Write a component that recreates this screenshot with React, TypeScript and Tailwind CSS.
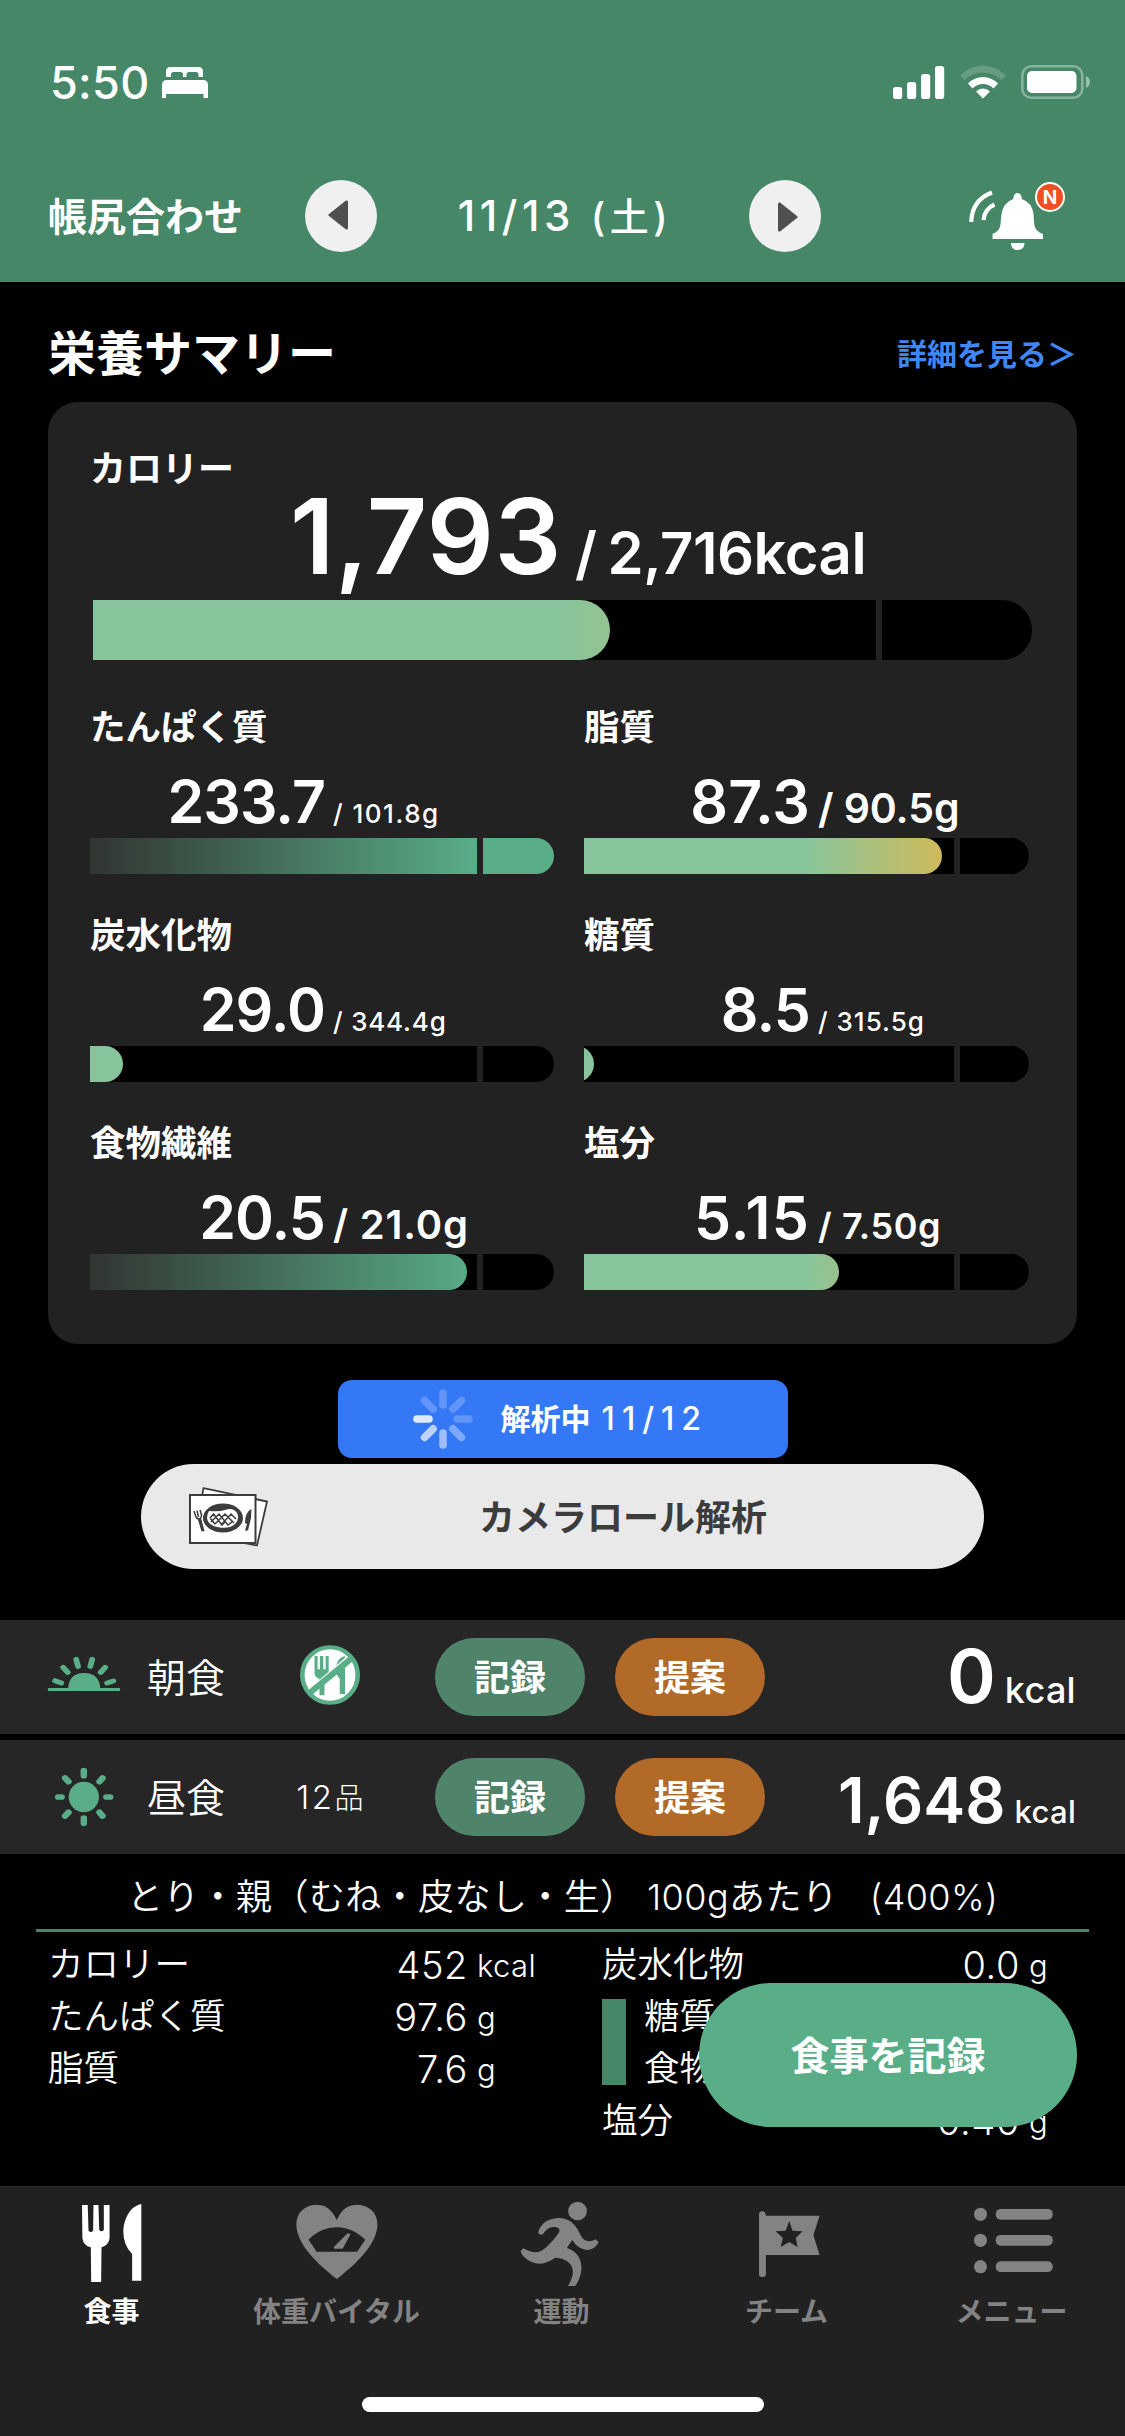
import type { ReactNode } from 'react';

interface Nutrient {
  name: string;
  value: string;
  valueClass?: string;
  target: string;
  targetClass: string;
  fill: number;
  gradient: string;
  over?: boolean;
}

interface Meal {
  name: string;
  icon: ReactNode;
  count: ReactNode;
  kcal: string;
  kcalClass: string;
  unitClass: string;
}

const LIMIT_GRADIENT = 'bg-[linear-gradient(to_right,#88c49b_60%,#d4ba56_100%)]';
const GOAL_GRADIENT = 'bg-[linear-gradient(to_right,#313531,#59ae88)]';

const leftNutrients: Nutrient[] = [
  { name: 'たんぱく質', value: '233.7', target: '101.8g', targetClass: 'text-[26px] font-medium tracking-[1.5px]', fill: 387, gradient: GOAL_GRADIENT, over: true },
  { name: '炭水化物', value: '29.0', target: '344.4g', targetClass: 'text-[26px] font-medium tracking-[0.8px]', fill: 33, gradient: LIMIT_GRADIENT },
  { name: '食物繊維', value: '20.5', target: '21.0g', targetClass: 'text-[40px] font-semibold tracking-[0.8px]', fill: 377, gradient: GOAL_GRADIENT },
];

const rightNutrients: Nutrient[] = [
  { name: '脂質', value: '87.3', valueClass: 'tracking-[0.1px]', target: '90.5g', targetClass: 'text-[41px] font-semibold tracking-[-0.1px]', fill: 358, gradient: LIMIT_GRADIENT },
  { name: '糖質', value: '8.5', target: '315.5g', targetClass: 'text-[26px] font-medium tracking-[1px]', fill: 10, gradient: LIMIT_GRADIENT },
  { name: '塩分', value: '5.15', valueClass: 'tracking-[1.2px]', target: '7.50g', targetClass: 'text-[36px] font-semibold tracking-[0.6px]', fill: 255, gradient: LIMIT_GRADIENT },
];

const StatusBar = () => (
  <div className="flex h-[150px] items-center pt-[14px] pl-[50px]">
    <span className="w-[112px] text-[45px] leading-none font-medium tracking-[0.3px]">5:50</span>
    <svg className="h-[31px] w-[46px]" viewBox="0 0 46 31" fill="#fff">
      <path d="M4 10V4.500Q4 0 8.500 0H36.500Q41 0 41 4.500V10H36.500V7.500Q36.500 5 34 5H27Q24.500 5 24.500 7.500V10H21V7.500Q21 5 18.500 5H11.500Q9 5 9 7.500V10Z" />
      <path d="M5 13H41Q46 13 46 18V31H41.500V27H4V31H0V18Q0 13 5 13Z" />
    </svg>
    <svg className="ml-auto h-[33px] w-[52px]" viewBox="0 0 52 33" fill="#fff">
      <rect x="0" y="21" width="9.200" height="12" rx="2.800" />
      <rect x="14" y="16" width="9.200" height="17" rx="2.800" />
      <rect x="28" y="8" width="9.200" height="25" rx="2.800" />
      <rect x="42" y="0" width="9.200" height="33" rx="2.800" />
    </svg>
    <svg className="ml-[15px] h-[34px] w-[46px]" viewBox="0 0 46 34" fill="#fff">
      <path d="M0 10.500Q10 0.500 23 0.500T46 10.500L41.500 15Q33 7.500 23 7.500T4.500 15Z" opacity=".18" />
      <path d="M8 18.500Q14.500 12 23 12T38 18.500L33.500 23.500Q29 19 23 19T12.500 23.500Z" />
      <path d="M16 26.500Q19 23.500 23 23.500T30 26.500L23 33.500Z" />
    </svg>
    <svg className="mr-[34px] ml-[15px] h-[34px] w-[70px]" viewBox="0 0 70 34">
      <rect x="1.300" y="1.300" width="60" height="31.400" rx="9" fill="none" stroke="#fff" strokeWidth="2.600" opacity=".36" />
      <rect x="6" y="6" width="49.500" height="22" rx="5" fill="#fff" />
      <path d="M65 11Q69 12.500 69 17T65 23Z" fill="#fff" opacity=".45" />
    </svg>
  </div>
);

const ArrowButton = ({ direction }: { direction: 'prev' | 'next' }) => (
  <button className="flex size-[72px] items-center justify-center rounded-full bg-[#f0f0f0]">
    {direction === 'prev' ? (
      <svg className="mt-[-2px] mr-[6px] h-[30px] w-[20px]" viewBox="0 0 20 30" fill="#505050">
        <path d="M1 14L18 .600Q20 0 20 2V28Q20 30 18 29.400L1 16Q-.500 15 1 14Z" />
      </svg>
    ) : (
      <svg className="mt-[2px] ml-[6px] h-[30px] w-[20px]" viewBox="0 0 20 30" fill="#505050">
        <path d="M19 14L2 .600Q0 0 0 2V28Q0 30 2 29.400L19 16Q20.500 15 19 14Z" />
      </svg>
    )}
  </button>
);

const NavBar = () => (
  <div className="flex h-[132px] items-center pl-[48px]">
    <span className="w-[257px] text-[39px] leading-none font-bold">帳尻合わせ</span>
    <ArrowButton direction="prev" />
    <span className="w-[372px] pl-[4px] text-center text-[42px] leading-none font-medium tracking-[4.6px]">
      11/13 <span className="text-[39px]">(土)</span>
    </span>
    <ArrowButton direction="next" />
    <div className="relative ml-[145px] h-[74px] w-[102px]">
      <svg className="h-[74px] w-[102px]" viewBox="0 0 102 74" fill="#fff">
        <path d="M51.500 14Q55.500 14 55.800 20Q66 23.500 67.500 35C68.500 46 67 51 77 55V60H26.500V55C36 51 34 46 35.500 35Q37.500 23.500 47.200 20Q47.500 14 51.500 14Z" />
        <path d="M45 64H58.500Q58.500 71 51.700 71T45 64Z" />
        <path d="M5.200 43Q6 21 26 13.500M17.500 41Q18.500 30 28.500 25.500" fill="none" stroke="#fff" strokeWidth="4.200" />
      </svg>
      <span className="absolute top-[3px] left-[69px] flex size-[30px] items-center justify-center rounded-full border-[2.500px] border-white bg-[#f04e23] text-[19px] leading-none font-bold">
        N
      </span>
    </div>
  </div>
);

// The gradient always spans the whole track, the clip cuts it at the current value.
const Bar = ({ track, fill, gradient, over, size }: { track: number; fill: number; gradient: string; over?: boolean; size: 'lg' | 'sm' }) => (
  <div className={size === 'lg' ? 'ml-[3px] flex h-[60px] w-[939px] gap-[6px]' : 'flex h-9 gap-[6px]'}>
    <div className="overflow-hidden bg-black" style={{ width: track }}>
      <div
        className={`h-full ${gradient}`}
        style={{ clipPath: over ? undefined : `inset(0 ${track - fill}px 0 -60px round 30px)` }}
      />
    </div>
    <div className={`flex-1 rounded-r-full ${over ? 'bg-[#59ae88]' : 'bg-black'}`} />
  </div>
);

const NutrientCell = ({ item, side }: { item: Nutrient; side: 'left' | 'right' }) => (
  <div>
    <div className="h-12 text-[35.5px] leading-[50px] font-bold">{item.name}</div>
    <div className="flex h-[87px] items-baseline pt-[22px] font-semibold whitespace-nowrap">
      <span
        className={`text-right text-[59px] leading-[57px] ${item.valueClass ?? 'tracking-[-0.9px]'} ${side === 'left' ? 'w-[235px]' : 'w-[226px]'}`}
      >
        {item.value}
      </span>
      <span className={`ml-[8px] leading-none ${item.targetClass}`}>/ {item.target}</span>
    </div>
    <Bar track={side === 'left' ? 387 : 370} fill={item.fill} gradient={item.gradient} over={item.over} size="sm" />
  </div>
);

const SummaryCard = () => (
  <section className="mx-12 h-[942px] rounded-[30px] bg-[#222222] pt-[42px] pl-[42px]">
    <div className="h-12 text-[36px] leading-[50px] font-bold">カロリー</div>
    <div className="flex h-[108px] items-baseline font-semibold whitespace-nowrap">
      <span className="w-[472px] text-right text-[105px] leading-[88px] tracking-[0.6px]">1,793</span>
      <span className="ml-[13px] text-[58px] leading-none tracking-[-0.5px] [word-spacing:-3px]">/ 2,716kcal</span>
    </div>
    <Bar track={783} fill={517} gradient={LIMIT_GRADIENT} size="lg" />
    <div className="mt-[43px] flex gap-[30px]">
      <div className="flex w-[464px] flex-col gap-[37px]">
        {leftNutrients.map((item) => (
          <NutrientCell key={item.name} item={item} side="left" />
        ))}
      </div>
      <div className="flex w-[445px] flex-col gap-[37px]">
        {rightNutrients.map((item) => (
          <NutrientCell key={item.name} item={item} side="right" />
        ))}
      </div>
    </div>
  </section>
);

const Spinner = () => (
  <svg className="size-[60px]" viewBox="-30 -30 60 60" stroke="#fff" strokeWidth="7.600" strokeLinecap="round">
    {[0.22, 0.22, 0.22, 0.36, 0.52, 0.68, 0.85, 0.22].map((opacity, i) => (
      <line key={i} x1="0" y1="-14" x2="0" y2="-26" opacity={opacity} transform={`rotate(${i * 45})`} />
    ))}
  </svg>
);

const PhotoIcon = () => (
  <svg className="h-[60px] w-[80px]" viewBox="0 0 80 60">
    <path d="M14.500 1.200L78 14.500L68 58.500L6 46Z" fill="#fff" stroke="#3c3c3c" strokeWidth="1.800" />
    <rect x="1" y="8" width="65.500" height="48" fill="#fff" stroke="#3c3c3c" strokeWidth="2" />
    <ellipse cx="34" cy="31" rx="20" ry="14.500" fill="#3c3c3c" />
    <path d="M20 24Q30 25 36 23Q44 20 48 26Q51 32 46 37Q40 42 31 40.500Q19 39 18 31Q18 27 20 24Z" fill="#fff" />
    <path
      d="M21 31L24.500 27L33 38L36 35M22 35L30 27L39 38L44 34M26 37L36 27L45 36M32 38L42 27L47 32M21 31L26 37"
      fill="none"
      stroke="#3c3c3c"
      strokeWidth="1.500"
    />
    <path d="M5 24L7 30Q9 33 11 31.500Q13 30 12.500 28L11 23M8 23.500L9.500 30" fill="none" stroke="#3c3c3c" strokeWidth="1.500" />
    <path d="M8.500 31L12 31L15.500 44L12.500 44.500Z" fill="#3c3c3c" />
    <path d="M62.500 22Q56 25 56 36L58 37L56 43.500H59L62 31Z" fill="#3c3c3c" />
  </svg>
);

const SunriseIcon = () => (
  <svg className="size-[76px]" viewBox="120.200 117 198.600 228" preserveAspectRatio="none" fill="#59ae88">
    <rect x="125" y="264" width="189" height="9" rx="3" />
    <path d="M178 266Q180 219 220 219T262 266Z" />
    <path d="M144 242L160 249M165 202L177 217M199 178L204 199M241 178L236 199M275 202L263 217M296 243L280 249" stroke="#59ae88" strokeWidth="15" strokeLinecap="round" />
  </svg>
);

const SunIcon = () => (
  <svg className="size-[76px]" viewBox="120.200 477 198.600 228" preserveAspectRatio="none" fill="#59ae88">
    <ellipse cx="219" cy="591" rx="39.500" ry="45.500" />
    <path
      d="M219 512V527M219 654V670M152 591H161M278 591H288M170 534L179 545M268 534L260 545M170 648L179 637M268 648L260 637"
      stroke="#59ae88"
      strokeWidth="17"
      strokeLinecap="round"
    />
  </svg>
);

const NoMealIcon = () => (
  <svg className="mb-1 size-[60px]" viewBox="784 135 157 180" preserveAspectRatio="none">
    <ellipse cx="862.500" cy="225" rx="72.500" ry="83.500" fill="#fff" stroke="#59ae88" strokeWidth="12" />
    <path
      d="M822 168H830V208H836V168H845V208H851V168H859V218Q859 232 848 236V286H835V236Q822 232 822 218ZM902 168V282H888V236Q876 222 878 200Q882 172 902 168Z"
      fill="#59ae88"
    />
    <path d="M808 270L908 172" stroke="#fff" strokeWidth="6" />
    <path d="M808 280L918 176" stroke="#59ae88" strokeWidth="17" />
  </svg>
);

const meals: Meal[] = [
  {
    name: '朝食',
    icon: <SunriseIcon />,
    count: <NoMealIcon />,
    kcal: '0',
    kcalClass: 'text-[74px] leading-[112px]',
    unitClass: 'text-[36px] ml-[9px] tracking-[0.3px]',
  },
  {
    name: '昼食',
    icon: <SunIcon />,
    count: (
      <>
        <span className="text-[33px] tracking-[2.5px]">12</span>品
      </>
    ),
    kcal: '1,648',
    kcalClass: 'text-[63px] leading-[120px]',
    unitClass: 'text-[31px] ml-[9px] tracking-[0.3px]',
  },
];

const MealRow = ({ meal }: { meal: Meal }) => (
  <div className="flex h-[114px] items-center bg-[#262626] pl-[46px]">
    {meal.icon}
    <span className="ml-[25px] w-[144px] text-[39px] leading-none font-[350]">{meal.name}</span>
    <span className="flex w-[78px] items-baseline justify-center text-[29px] leading-none font-light whitespace-nowrap">{meal.count}</span>
    <button className="ml-[66px] h-[78px] w-[150px] rounded-full bg-[#4f846b] pt-[2px] text-[36px] leading-none font-bold">記録</button>
    <button className="ml-[30px] h-[78px] w-[150px] rounded-full bg-[#b16a28] pt-[2px] text-[36px] leading-none font-bold">提案</button>
    <div className="flex flex-1 items-baseline justify-end self-start pr-[49px] font-semibold">
      <span className={meal.kcalClass}>{meal.kcal}</span>
      <span className={`leading-none font-medium ${meal.unitClass}`}>kcal</span>
    </div>
  </div>
);

const DetailRow = ({ name, value, unit }: { name: string; value: string; unit: string }) => (
  <div className="flex h-[52px] items-center">
    <span className="text-[35.5px] leading-none">{name}</span>
    <span className="ml-auto text-[38px] leading-none tracking-[0.6px]">{value}</span>
    <span className="w-[76px] pl-[9px] text-[31px] leading-none tracking-[0.4px]">{unit}</span>
  </div>
);

const FoodDetail = () => (
  <section className="relative h-[332px] font-[350]">
    <div className="mx-9 h-[78px] border-b-[3px] border-[#458767] pt-[10px] text-center text-[36px] leading-[66px] tracking-[0.4px] whitespace-pre">
      とり・親（むね・皮なし・生） 100gあたり   (400%)
    </div>
    <div className="flex pt-[7px] pl-[48px]">
      <div className="w-[496px]">
        <DetailRow name="カロリー" value="452" unit="kcal" />
        <DetailRow name="たんぱく質" value="97.6" unit="g" />
        <DetailRow name="脂質" value="7.6" unit="g" />
      </div>
      <div className="ml-[58px] w-[494px]">
        <DetailRow name="炭水化物" value="0.0" unit="g" />
        <div className="flex">
          <div className="mt-2 mb-[10px] w-6 bg-[#458767]" />
          <div className="flex-1 pl-[18px]">
            <DetailRow name="糖質" value="0.0" unit="g" />
            <DetailRow name="食物繊維" value="0.0" unit="g" />
          </div>
        </div>
        <DetailRow name="塩分" value="0.40" unit="g" />
      </div>
    </div>
    <button className="absolute top-[129px] right-12 h-[144px] w-[378px] rounded-full bg-[#59ae88] pt-[2px] text-[39px] font-bold">
      食事を記録
    </button>
  </section>
);

const tabs = [
  {
    label: '食事',
    icon: (
      <svg className="size-[90px]" viewBox="176.400 90 235.200 270" preserveAspectRatio="none" fill="currentColor">
        <path d="M213 105H228L230 182Q236 190 242 182L243 105H256L258 180Q264 188 270 180L270 105H285V205Q283 226 264 232L263 336H237L236 232Q217 228 214 205ZM368 102V332H344V252Q321 225 321 185C322 145 340 108 368 102Z" />
      </svg>
    ),
  },
  {
    label: '体重バイタル',
    icon: (
      <svg className="size-[90px]" viewBox="764.300 90 235.200 270" preserveAspectRatio="none" fill="currentColor" fillRule="evenodd">
        <path d="M879 150C892 114 910 104 932 104C966 106 985 130 985 164C984 225 925 285 879 327C832 285 774 225 773 164C773 130 792 106 825 104C848 104 865 116 879 150ZM805 209L826 245H932L953 209C930 184 905 172 879 172S826 184 805 209Z" />
        <path d="M907 190L915 192L894 236H872Q870 232 873 229Z" />
      </svg>
    ),
  },
  {
    label: '運動',
    icon: (
      <svg className="size-[90px]" viewBox="1352.300 90 235.200 270" preserveAspectRatio="none" fill="currentColor">
        <ellipse cx="1508" cy="123" rx="24.500" ry="28" />
        <path d="M1405 188C1410 160 1432 144 1462 144C1490 146 1506 168 1516 196C1524 216 1540 218 1555 208L1563 217C1552 240 1535 243 1524 238C1508 232 1500 220 1494 210L1480 234C1505 242 1518 265 1518 292C1518 315 1510 335 1502 348H1483C1498 318 1499 300 1490 284C1482 272 1470 264 1450 263C1430 278 1412 284 1398 280C1378 274 1362 258 1359 244L1366 235C1385 247 1400 250 1412 243C1425 236 1450 205 1460 186C1462 178 1460 174 1452 172C1435 168 1425 180 1418 192L1411 195Z" />
      </svg>
    ),
  },
  {
    label: 'チーム',
    icon: (
      <svg className="size-[90px]" viewBox="506.500 90 249.800 270" preserveAspectRatio="none" fill="currentColor" fillRule="evenodd">
        <path d="M551 133Q551 124 560 124T570 137H719L702 196L719 255H570V313Q570 321 560 321T551 313ZM635 153L625 182L597 184L617 204L611 231L635 216L658 231L653 204L672 184L644 182Z" />
      </svg>
    ),
  },
  {
    label: 'メニュー',
    icon: (
      <svg className="size-[90px]" viewBox="1130.900 90 249.800 270" preserveAspectRatio="none" fill="currentColor">
        {[133, 211, 290].map((y) => (
          <g key={y}>
            <ellipse cx="1165.500" cy={y} rx="18" ry="20" />
            <rect x="1208" y={y - 16} width="158" height="32" rx="14" />
          </g>
        ))}
      </svg>
    ),
  },
];

const TabBar = () => (
  <nav className="flex h-[250px] flex-col border-t border-[#2b2b2b] bg-[#212121] pt-[13px]">
    <div className="grid grid-cols-5">
      {tabs.map((tab, i) => (
        <div key={tab.label} className={`flex flex-col items-center ${i === 0 ? 'text-white' : 'text-[#838383]'}`}>
          {tab.icon}
          <span className="pr-[2px] text-[28px] leading-[44px] font-bold">{tab.label}</span>
        </div>
      ))}
    </div>
    <div className="mx-auto mt-[63px] h-[15px] w-[402px] rounded-full bg-white" />
  </nav>
);

const App = () => (
  <div
    lang="ja"
    className="flex h-[2436px] w-[1125px] flex-col overflow-hidden bg-black font-['Inter','Noto_Sans_CJK_JP',sans-serif] text-white"
  >
    <header className="h-[282px] bg-[#458767]">
      <StatusBar />
      <NavBar />
    </header>
    <div className="flex h-[120px] items-center justify-between pt-6 pr-[48px] pl-[48px]">
      <h1 className="text-[48px] leading-none font-bold">栄養サマリー</h1>
      <a className="text-[30px] leading-none font-bold text-[#3f87f5]">詳細を見る＞</a>
    </div>
    <SummaryCard />
    <div className="mx-auto mt-9 flex h-[78px] w-[450px] items-center rounded-[14px] bg-[#3478f6] pl-[75px] text-[30px] leading-none">
      <Spinner />
      <span className="ml-[28px] font-bold whitespace-nowrap">
        解析中 <span className="ml-[4px] text-[32px] font-medium tracking-[7px]">11/12</span>
      </span>
    </div>
    <button className="mx-auto mt-[6px] flex h-[105px] w-[843px] items-center rounded-full bg-[#e9e9e9] pl-[48px] text-[36px] leading-none font-bold text-[#3c3c3c]">
      <PhotoIcon />
      <span className="ml-[210px] pt-[2px]">カメラロール解析</span>
    </button>
    <div className="mt-[51px] flex flex-col gap-[6px]">
      {meals.map((meal) => (
        <MealRow key={meal.name} meal={meal} />
      ))}
    </div>
    <FoodDetail />
    <TabBar />
  </div>
);

export default App;
